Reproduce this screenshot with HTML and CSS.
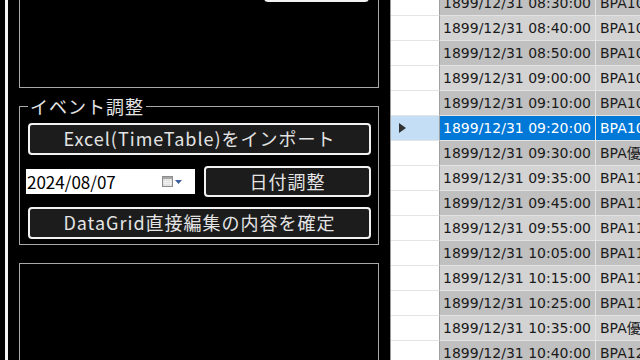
FILE: index.html
```html
<!DOCTYPE html>
<html lang="ja">
<head>
    <meta charset="UTF-8">
    <meta name="viewport" content="width=device-width, initial-scale=1.0">
    <title>イベント調整</title>
    <link rel="stylesheet" href="styles.css">
</head>
<body>
    <div class="app">
        <div class="left-pane">
            <div class="panel-inner">
                <div class="box box-top">
                    <div class="btn btn-top"></div>
                </div>

                <fieldset class="group">
                    <legend>イベント調整</legend>
                    <div class="btn">Excel(TimeTable)をインポート</div>
                    <div class="date-row">
                        <div class="date-picker">
                            <span class="date-text">2024/08/07</span>
                            <svg class="cal-icon" width="21" height="12" viewBox="0 0 21 12">
                                <rect x="0.5" y="0.5" width="10" height="10" fill="#dcdcdc" stroke="#8c8c8c"/>
                                <rect x="1" y="1" width="9" height="2" fill="#a8a8a8"/>
                                <path d="M1 5.5h9M1 7.5h9M3.5 3v7M6 3v7M8.5 3v7" stroke="#f4f4f4" stroke-width="0.8"/>
                                <path d="M13 4h7l-3.5 4z" fill="#3d5f9e"/>
                            </svg>
                        </div>
                        <div class="btn btn-date">日付調整</div>
                    </div>
                    <div class="btn btn-last">DataGrid直接編集の内容を確定</div>
                </fieldset>

                <div class="box box-bottom"></div>
            </div>
        </div>

        <div class="grid">
            <div class="row"><div class="head"></div><div class="cell">1899/12/31 08:30:00</div><div class="cell last">BPA101 開会式</div></div>
            <div class="row alt"><div class="head"></div><div class="cell">1899/12/31 08:40:00</div><div class="cell last">BPA102 予選</div></div>
            <div class="row"><div class="head"></div><div class="cell">1899/12/31 08:50:00</div><div class="cell last">BPA103 予選</div></div>
            <div class="row alt"><div class="head"></div><div class="cell">1899/12/31 09:00:00</div><div class="cell last">BPA104 予選</div></div>
            <div class="row"><div class="head"></div><div class="cell">1899/12/31 09:10:00</div><div class="cell last">BPA105 予選</div></div>
            <div class="row selected"><div class="head"><span class="arrow"></span></div><div class="cell">1899/12/31 09:20:00</div><div class="cell last">BPA106 予選</div></div>
            <div class="row"><div class="head"></div><div class="cell">1899/12/31 09:30:00</div><div class="cell last">BPA優勝決定戦</div></div>
            <div class="row alt"><div class="head"></div><div class="cell">1899/12/31 09:35:00</div><div class="cell last">BPA111 本選</div></div>
            <div class="row"><div class="head"></div><div class="cell">1899/12/31 09:45:00</div><div class="cell last">BPA112 本選</div></div>
            <div class="row alt"><div class="head"></div><div class="cell">1899/12/31 09:55:00</div><div class="cell last">BPA113 本選</div></div>
            <div class="row"><div class="head"></div><div class="cell">1899/12/31 10:05:00</div><div class="cell last">BPA114 本選</div></div>
            <div class="row alt"><div class="head"></div><div class="cell">1899/12/31 10:15:00</div><div class="cell last">BPA115 本選</div></div>
            <div class="row"><div class="head"></div><div class="cell">1899/12/31 10:25:00</div><div class="cell last">BPA116 本選</div></div>
            <div class="row alt"><div class="head"></div><div class="cell">1899/12/31 10:35:00</div><div class="cell last">BPA優勝決定戦</div></div>
            <div class="row"><div class="head"></div><div class="cell">1899/12/31 10:40:00</div><div class="cell last">BPA121 決勝</div></div>
        </div>
    </div>
</body>
</html>
```

FILE: styles.css
```css
body {
    margin: 0;
    background: #000;
    font-family: "Noto Sans CJK JP", sans-serif;
    overflow: hidden;
}
.app {
    display: flex;
    width: 640px;
    height: 360px;
    overflow: hidden;
}

/* 左側パネル */
.left-pane {
    flex: none;
    width: 390px;
    box-sizing: border-box;
    padding: 0 11px 0 5px;
}
.panel-inner {
    border-left: 3px solid #f4f4f4;
    padding-left: 11px;
    height: 400px;
    margin-top: -40px;
}
.box {
    box-sizing: border-box;
    width: 360px;
    border: 1px solid #a8a8a8;
}
.box-top {
    height: 128px;
    padding: 9px 0 0 244px;
}
.box-bottom {
    height: 160px;
    margin-top: 18px;
}
.btn {
    box-sizing: border-box;
    height: 32px;
    border: 2px solid #f2f2f2;
    border-radius: 4px;
    background: #1c1c1c;
    color: #e4e4e4;
    font-size: 18px;
    letter-spacing: 1px;
    line-height: 27px;
    text-align: center;
    white-space: nowrap;
}
.btn-top {
    width: 105px;
}
.group {
    box-sizing: border-box;
    width: 360px;
    margin: 9px 0 0 0;
    padding: 8px 7px 5px 8px;
    border: 1px solid #a8a8a8;
    color: #e4e4e4;
}
.group legend {
    padding: 0 2px;
    font-size: 18px;
    letter-spacing: 1px;
    line-height: 18px;
}
.date-row {
    display: flex;
    align-items: center;
    gap: 9px;
    height: 31px;
    margin-top: 11px;
    margin-left: -2px;
}
.date-picker {
    flex: none;
    box-sizing: border-box;
    width: 169px;
    height: 25px;
    background: #fff;
    color: #000;
    display: flex;
    align-items: center;
    justify-content: space-between;
    padding: 0 12px 0 1px;
}
.date-text {
    font-size: 17px;
    line-height: 25px;
}
.btn-date {
    flex: 1;
    height: 31px;
}
.btn-last {
    margin-top: 10px;
}

/* 右側のDataGrid */
.grid {
    flex: 1;
    margin-top: -9px;
    background: #fff;
    border-left: 1px solid #9a9a9a;
    font-family: "DejaVu Sans", "Noto Sans CJK JP", sans-serif;
    font-size: 14px;
    color: #1a1a1a;
}
.row {
    display: flex;
    height: 25px;
    background: #c0c0c0;
}
.row.alt {
    background: #d3d3d3;
}
.head {
    flex: none;
    width: 48px;
    background: #fff;
    border-right: 1px solid #a0a0a0;
    border-bottom: 1px solid #e4e4e4;
    display: flex;
    align-items: center;
    padding-left: 8px;
    box-sizing: border-box;
    width: 49px;
}
.cell {
    box-sizing: border-box;
    width: 156px;
    flex: none;
    padding-left: 3px;
    line-height: 24px;
    border-right: 1px solid #e4e4e4;
    border-bottom: 1px solid #e4e4e4;
    white-space: nowrap;
    overflow: hidden;
}
.cell.last {
    flex: 1;
    width: auto;
    border-right: none;
    padding-left: 4px;
}
.row.selected .head {
    background: #c4dff5;
}
.row.selected .cell {
    background: #0078d7;
    color: #fff;
}
.arrow {
    width: 0;
    height: 0;
    border-top: 5px solid transparent;
    border-bottom: 5px solid transparent;
    border-left: 7px solid #333;
}
```
